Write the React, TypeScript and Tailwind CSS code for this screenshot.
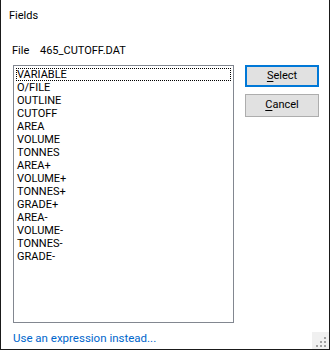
const items = [
  "VARIABLE",
  "O/FILE",
  "OUTLINE",
  "CUTOFF",
  "AREA",
  "VOLUME",
  "TONNES",
  "AREA+",
  "VOLUME+",
  "TONNES+",
  "GRADE+",
  "AREA-",
  "VOLUME-",
  "TONNES-",
  "GRADE-",
];

function SizeGrip() {
  return (
    <svg width="17" height="17" viewBox="0 0 17 17" className="shrink-0 bg-[#f0f0f0]">
      <rect x="12" y="5" width="2" height="2" fill="#a0a0a0" />
      <rect x="8" y="9" width="2" height="2" fill="#a0a0a0" />
      <rect x="12" y="9" width="2" height="2" fill="#a0a0a0" />
      <rect x="4" y="13" width="2" height="2" fill="#a0a0a0" />
      <rect x="8" y="13" width="2" height="2" fill="#a0a0a0" />
      <rect x="12" y="13" width="2" height="2" fill="#a0a0a0" />
    </svg>
  );
}

export default function App() {
  return (
    <div
      className="h-[351px] w-[331px] bg-white text-[11px] text-black"
      style={{ fontFamily: "Roboto, 'Liberation Sans', sans-serif" }}
    >
      <div className="flex h-[350px] w-[330px] flex-col border-x border-b border-[#1a1a1a]">
        <div className="pl-[8px] pt-[9px] leading-[14px]">Fields</div>

        <div className="mt-[21px] flex pl-[11px] leading-[14px]">
          <span className="w-[28px] shrink-0">File</span>
          <span>465_CUTOFF.DAT</span>
        </div>

        <div className="mt-[7px] flex gap-[11px] pl-[12px]">
          <div className="h-[258px] w-[221px] shrink-0 border border-[#828790] px-[1px] pt-[2px]">
            {items.map((item, i) => (
              <div
                key={item}
                className={
                  "mx-[1px] h-[13px] pl-[1px] leading-[13px] " +
                  (i === 0 ? "outline-1 -outline-offset-1 outline-dotted outline-black" : "")
                }
              >
                {item}
              </div>
            ))}
          </div>

          <div className="flex flex-col gap-[7px]">
            <button className="flex h-[22px] w-[74px] items-center justify-center border-2 border-[#0078d7] bg-[#e1e1e1]">
              <span>
                <span className="underline underline-offset-2">S</span>elect
              </span>
            </button>
            <button className="flex h-[23px] w-[74px] items-center justify-center border border-[#adadad] bg-[#e1e1e1]">
              <span>
                <span className="underline underline-offset-2">C</span>ancel
              </span>
            </button>
          </div>
        </div>

        <div className="mt-auto flex items-end justify-between">
          <span className="mb-[4px] pl-[12px] text-[11.5px] leading-[14px] text-[#0066cc]">
            Use an expression instead...
          </span>
          <SizeGrip />
        </div>
      </div>
    </div>
  );
}
